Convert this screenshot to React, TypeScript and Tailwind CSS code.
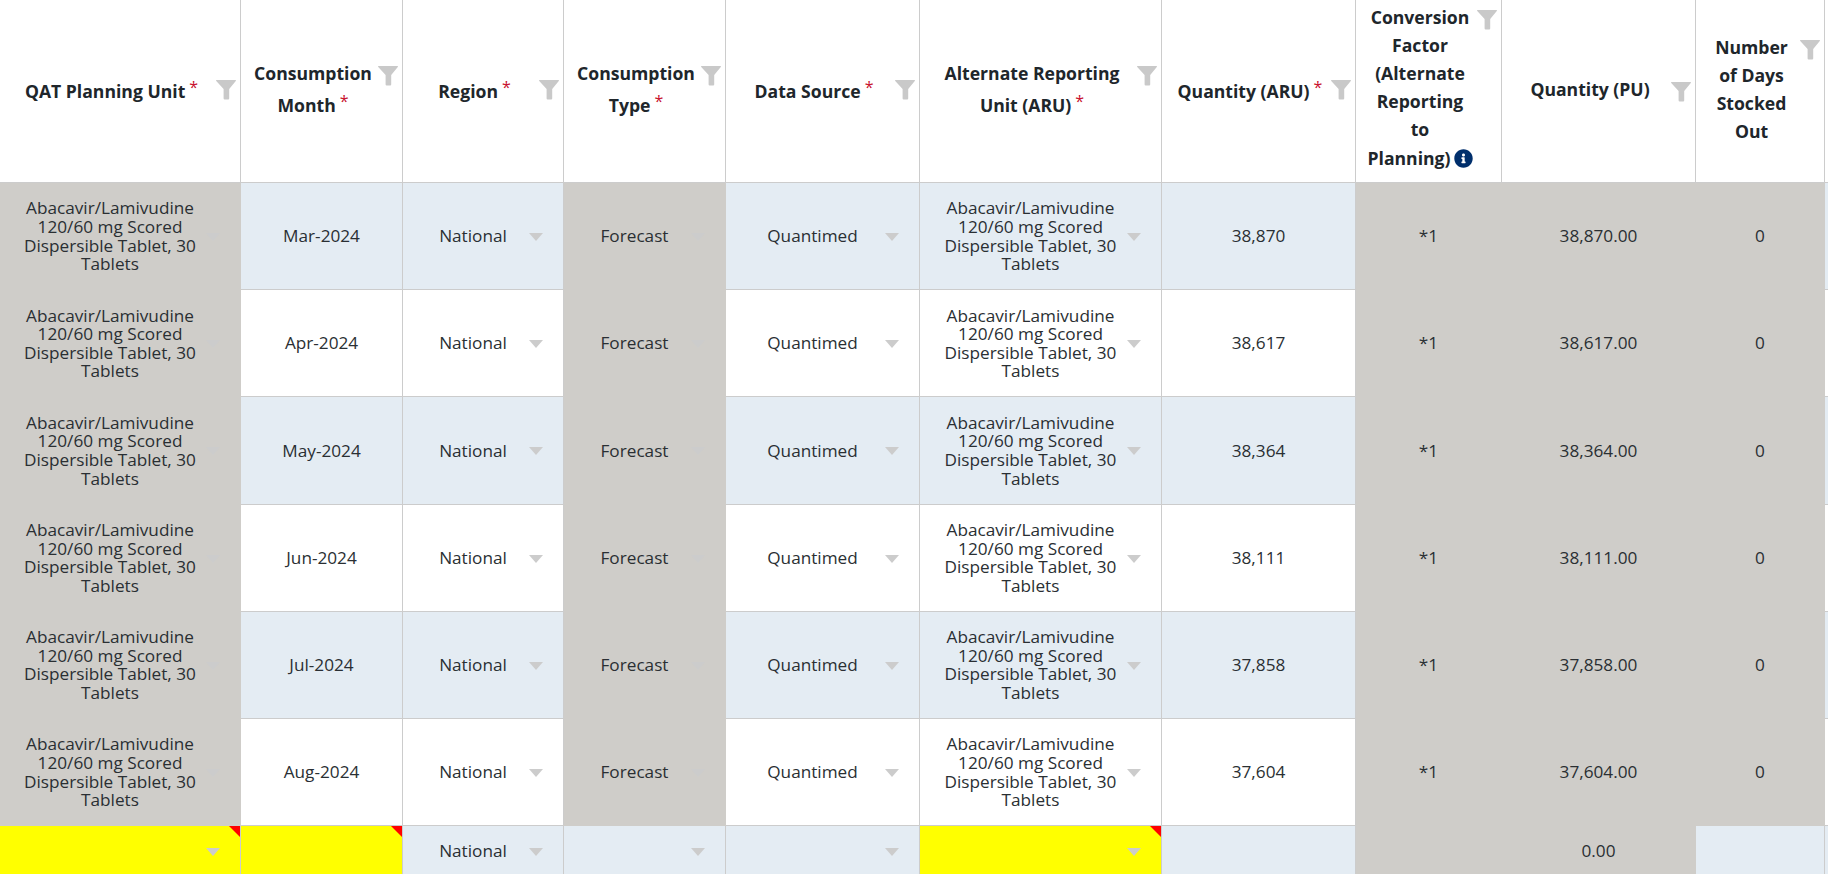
import { FaInfoCircle } from "react-icons/fa"

const rows = [
  { month: "Mar-2024", aru: "38,870", pu: "38,870.00" },
  { month: "Apr-2024", aru: "38,617", pu: "38,617.00" },
  { month: "May-2024", aru: "38,364", pu: "38,364.00" },
  { month: "Jun-2024", aru: "38,111", pu: "38,111.00" },
  { month: "Jul-2024", aru: "37,858", pu: "37,858.00" },
  { month: "Aug-2024", aru: "37,604", pu: "37,604.00" },
]

const unitName = "Abacavir/Lamivudine\n120/60 mg Scored\nDispersible Tablet, 30\nTablets"

function Funnel() {
  return (
    <svg viewBox="0 0 20 20" className="w-5 h-5 shrink-0 fill-[#c9c9c9] mt-[7px]">
      <path d="M0.5 0h19q.5 0 .5 .7L13.2 9v9.6q0 1-1 1h-3.6q-1 0-1-1V9L0 .7Q0 0 .5 0z" />
    </svg>
  )
}

function Star() {
  return <span className="ml-[4px] text-[#c8102e] text-[16px] align-[5px] font-normal">*</span>
}

function HeadCell({ children }: { children: React.ReactNode }) {
  return (
    <th className="h-[183px] p-0 pl-[7px] pr-[4px] pb-1 border-r border-b border-[#cccccc] bg-white align-middle font-bold text-[17.6px] leading-[28px] text-[#20262b]">
      <div className="flex items-start">
        <div className="flex-1 text-center">{children}</div>
        <Funnel />
      </div>
    </th>
  )
}

function Arrow() {
  return <span className="absolute right-[20px] top-1/2 -translate-y-[3px] w-0 h-0 border-x-[7px] border-x-transparent border-t-[8px] border-t-[#cccccc]" />
}

function Corner() {
  return <span className="absolute top-0 right-0 w-0 h-0 border-l-[11px] border-l-transparent border-t-[11px] border-t-[#ff0000]" />
}

function DropCell({ stripe, text, readonly }: { stripe: string; text: string; readonly?: boolean }) {
  return (
    <td className={`relative p-0 pt-px pr-5 whitespace-pre-line text-center border-r border-b ${readonly ? "bg-[#cfcdc9] border-[#cfcdc9]" : `${stripe} border-[#cccccc]`}`}>
      {text}
      <Arrow />
    </td>
  )
}

function TextCell({ stripe, text, readonly }: { stripe: string; text: string; readonly?: boolean }) {
  return (
    <td className={`p-0 pt-px text-center border-r border-b ${readonly ? "bg-[#cfcdc9] border-[#cfcdc9]" : `${stripe} border-[#cccccc]`}`}>
      {text}
    </td>
  )
}

function YellowCell({ arrow }: { arrow?: boolean }) {
  return (
    <td className="relative p-0 bg-[#ffff00] border-r border-[#cccccc]">
      <Corner />
      {arrow && <Arrow />}
    </td>
  )
}

export default function App() {
  const blue = "bg-[#e4ecf3]"

  return (
    <div className="h-screen overflow-hidden bg-white font-['Open_Sans','Noto_Sans',sans-serif] text-[17.2px] leading-[18.6px] text-[#2a2f33]">
      <table className="table-fixed border-separate border-spacing-0 w-[1900px]">
        <colgroup>
          <col className="w-[241px]" />
          <col className="w-[162px]" />
          <col className="w-[161px]" />
          <col className="w-[162px]" />
          <col className="w-[194px]" />
          <col className="w-[242px]" />
          <col className="w-[194px]" />
          <col className="w-[146px]" />
          <col className="w-[194px]" />
          <col className="w-[129px]" />
          <col className="w-[75px]" />
        </colgroup>
        <thead>
          <tr>
            <HeadCell>QAT Planning Unit<Star /></HeadCell>
            <HeadCell>Consumption<br />Month<Star /></HeadCell>
            <HeadCell>Region<Star /></HeadCell>
            <HeadCell>Consumption<br />Type<Star /></HeadCell>
            <HeadCell>Data Source<Star /></HeadCell>
            <HeadCell>Alternate Reporting<br />Unit (ARU)<Star /></HeadCell>
            <HeadCell>Quantity (ARU)<Star /></HeadCell>
            <HeadCell>
              <div className="pb-[3px]">
                Conversion<br />Factor<br />(Alternate<br />Reporting<br />to
                <div className="mt-px">
                  Planning)
                  <FaInfoCircle className="inline-block ml-[3px] w-[19px] h-[19px] align-[-3px] text-[#002f6c]" />
                </div>
              </div>
            </HeadCell>
            <HeadCell>Quantity (PU)</HeadCell>
            <HeadCell>Number<br />of Days<br />Stocked<br />Out</HeadCell>
            <th className="bg-white border-b border-[#cccccc]" />
          </tr>
        </thead>
        <tbody>
          {rows.map((row, i) => {
            const stripe = i % 2 === 0 ? blue : "bg-white"
            return (
              <tr key={row.month} className="h-[107.2px]">
                <DropCell stripe={stripe} text={unitName} readonly />
                <TextCell stripe={stripe} text={row.month} />
                <DropCell stripe={stripe} text="National" />
                <DropCell stripe={stripe} text="Forecast" readonly />
                <DropCell stripe={stripe} text="Quantimed" />
                <DropCell stripe={stripe} text={unitName} />
                <TextCell stripe={stripe} text={row.aru} />
                <TextCell stripe={stripe} text="*1" readonly />
                <TextCell stripe={stripe} text={row.pu} readonly />
                <TextCell stripe={stripe} text="0" readonly />
                <td className={`${stripe} border-b border-[#cccccc]`} />
              </tr>
            )
          })}
          <tr className="h-[50px]">
            <YellowCell arrow />
            <YellowCell />
            <DropCell stripe={blue} text="National" />
            <DropCell stripe={blue} text="" />
            <DropCell stripe={blue} text="" />
            <YellowCell arrow />
            <TextCell stripe={blue} text="" />
            <TextCell stripe={blue} text="" readonly />
            <TextCell stripe={blue} text="0.00" readonly />
            <TextCell stripe={blue} text="" />
            <td className={blue} />
          </tr>
        </tbody>
      </table>
    </div>
  )
}
